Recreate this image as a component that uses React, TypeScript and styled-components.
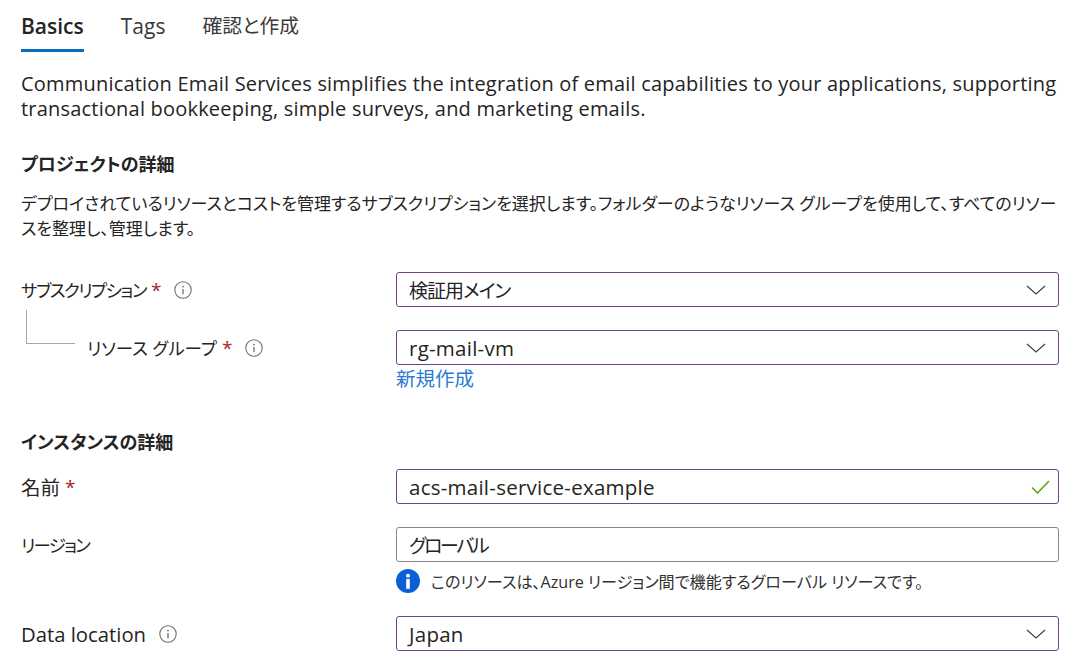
import React from "react";
import styled, {createGlobalStyle} from "styled-components";

const GlobalStyle = createGlobalStyle`
  html, body {
    margin: 0;
    padding: 0;
    background: #fff;
  }
  body {
    font-family: "Open Sans", "Noto Sans CJK JP", sans-serif;
    font-feature-settings: "palt";
    color: #252423;
  }
`;

const Page = styled.div`
  width: 1078px;
  height: 670px;
  overflow: hidden;
  box-sizing: border-box;
  padding: 0 19px 0 21px;
`;

const TabBar = styled.div`
  display: flex;
  gap: 37px;
  height: 52px;
`;

const Tab = styled.div<{ $active?: boolean; $cjk?: boolean }>`
  height: 52px;
  box-sizing: border-box;
  padding-top: 11px;
  font-size: ${(p) => (p.$cjk ? "19.8px" : "21px")};
  line-height: 30px;
  font-weight: ${(p) => (p.$active ? 600 : 400)};
  border-bottom: 3px solid ${(p) => (p.$active ? "#0f6cbd" : "transparent")};
  color: ${(p) => (p.$active ? "#252423" : "#3b3a39")};
  white-space: nowrap;
`;

const Intro = styled.p`
  margin: 19px 0 0;
  font-size: 20px;
  letter-spacing: 0.2px;
  line-height: 25px;
  width: 1045px;
`;

const SectionTitle = styled.h2<{ $top: number }>`
  margin: ${(p) => p.$top}px 0 0;
  font-size: 18px;
  line-height: 26px;
  font-weight: 700;
`;

const Description = styled.p`
  margin: 14px 0 0;
  font-size: 17px;
  line-height: 25px;
  width: 1036px;
`;

const FormRow = styled.div<{ $top: number; $nested?: boolean }>`
  position: relative;
  display: grid;
  grid-template-columns: 375px 663px;
  align-items: start;
  margin-top: ${(p) => p.$top}px;
  ${(p) =>
    p.$nested &&
    `
    &::before {
      content: "";
      position: absolute;
      left: 5px;
      top: -20px;
      width: 48px;
      height: 33px;
      border-left: 1px solid #a6a6a6;
      border-bottom: 1px solid #a6a6a6;
    }
  `}
`;

const Label = styled.div<{ $nested?: boolean; $size?: number }>`
  display: flex;
  align-items: center;
  height: 35px;
  font-size: ${(p) => p.$size ?? 17.5}px;
  padding-left: ${(p) => (p.$nested ? "66px" : "0")};
  white-space: nowrap;
`;

const LabelText = styled.span<{ $track?: number }>`
  letter-spacing: ${(p) => p.$track ?? 0}px;
`;

const Required = styled.span`
  color: #a4262c;
  margin-left: 5px;
  font-size: 19px;
`;

const InfoButton = styled.svg`
  width: 18px;
  height: 18px;
  margin-left: 13px;
  color: #6e6e6e;
  flex-shrink: 0;
`;

const Field = styled.div<{ $plain?: boolean; $cjk?: boolean }>`
  display: flex;
  align-items: center;
  justify-content: space-between;
  box-sizing: border-box;
  height: 35px;
  padding: 0 12px;
  border: 1px solid ${(p) => (p.$plain ? "#8a8886" : "#6f4391")};
  border-radius: 3px;
  font-size: ${(p) => (p.$cjk ? "19px" : "20.5px")};
  letter-spacing: ${(p) => (p.$cjk ? "0" : "0.25px")};
`;

const FieldText = styled.span<{ $track?: number }>`
  letter-spacing: ${(p) => p.$track ?? 0}px;
`;

const CreateLink = styled.div`
  font-size: 19.5px;
  line-height: 26px;
  margin-top: 1px;
  color: #2b7bd3;
`;

const Note = styled.div`
  display: flex;
  align-items: center;
  gap: 11px;
  margin-top: 6px;
  height: 26px;
  font-size: 16.1px;
  color: #323130;
`;

const Sub = styled.div``;

const CheckMark = styled.svg`
  margin-right: -4px;
`;

const Info = () => (
    <InfoButton viewBox="0 0 18 18" fill="none">
        <circle cx="9" cy="9" r="8.2" stroke="currentColor" strokeWidth="1.1"/>
        <circle cx="9" cy="5.6" r="0.9" fill="currentColor"/>
        <path d="M9 8v5.2" stroke="currentColor" strokeWidth="1.3"/>
    </InfoButton>
);

const Chevron = () => (
    <svg width="20" height="10" viewBox="0 0 20 10" fill="none">
        <path d="M1 1l9 8 9-8" stroke="#404040" strokeWidth="1.2"/>
    </svg>
);

const Check = () => (
    <CheckMark width="19" height="14" viewBox="0 0 19 14" fill="none">
        <path d="M1 7.5l5.5 5.5L18 1" stroke="#57a300" strokeWidth="1.5"/>
    </CheckMark>
);

const InfoSolid = () => (
    <svg width="24" height="24" viewBox="0 0 24 24">
        <circle cx="12" cy="12" r="12" fill="#0a5fd6"/>
        <circle cx="12" cy="6.8" r="2" fill="#fff"/>
        <rect x="10.2" y="10" width="3.6" height="9.8" fill="#fff"/>
    </svg>
);

export default function App() {
    return (
        <Page>
            <GlobalStyle/>
            <TabBar>
                <Tab $active>Basics</Tab>
                <Tab>Tags</Tab>
                <Tab $cjk>確認と作成</Tab>
            </TabBar>
            <Intro>
                Communication Email Services simplifies the integration of email capabilities to your applications, supporting transactional bookkeeping, simple surveys, and marketing emails.
            </Intro>
            <SectionTitle $top={30}>プロジェクトの詳細</SectionTitle>
            <Description>
                デプロイされているリソースとコストを管理するサブスクリプションを選択します。フォルダーのようなリソース グループを使用して、すべてのリソースを整理し、管理します。
            </Description>
            <FormRow $top={31}>
                <Label><LabelText $track={-1.5}>サブスクリプション</LabelText><Required>*</Required><Info/></Label>
                <Field $cjk><FieldText $track={-1}>検証用メイン</FieldText><Chevron/></Field>
            </FormRow>
            <FormRow $top={23} $nested>
                <Label $nested>リソース グループ<Required>*</Required><Info/></Label>
                <Sub>
                    <Field>rg-mail-vm<Chevron/></Field>
                    <CreateLink>新規作成</CreateLink>
                </Sub>
            </FormRow>
            <SectionTitle $top={37}>インスタンスの詳細</SectionTitle>
            <FormRow $top={14}>
                <Label $size={19.5}>名前<Required>*</Required></Label>
                <Field>acs-mail-service-example<Check/></Field>
            </FormRow>
            <FormRow $top={23}>
                <Label><LabelText $track={-1.8}>リージョン</LabelText></Label>
                <Sub>
                    <Field $plain $cjk><FieldText $track={-2.3}>グローバル</FieldText></Field>
                    <Note><InfoSolid/>このリソースは、Azure リージョン間で機能するグローバル リソースです。</Note>
                </Sub>
            </FormRow>
            <FormRow $top={22}>
                <Label $size={20.3}>Data location<Info/></Label>
                <Field>Japan<Chevron/></Field>
            </FormRow>
        </Page>
    );
}
